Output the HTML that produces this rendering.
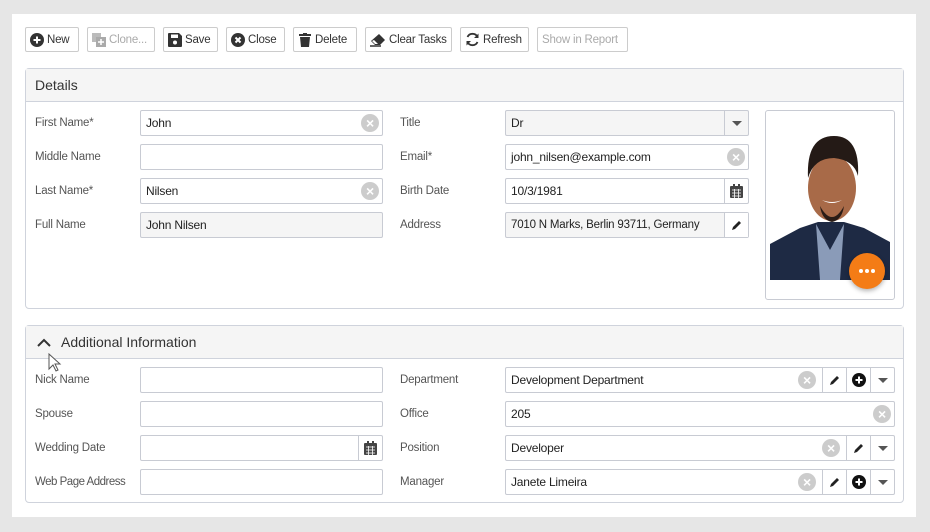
<!DOCTYPE html>
<html><head><meta charset="utf-8"><style>
*{box-sizing:border-box;margin:0;padding:0}
body{width:930px;height:532px;background:#e6e6e6;font-family:"Liberation Sans",sans-serif;font-size:12px;color:#333;position:relative;overflow:hidden}
.panel{position:absolute;left:12px;top:14px;width:904px;height:503px;background:#fff}
.a{position:absolute}
.btn{position:absolute;top:27px;height:25px;border:1px solid #ccc;border-radius:2px;background:#fff;display:flex;align-items:center;padding:0 4px;gap:3px;font-size:11.5px;color:#333;white-space:nowrap;letter-spacing:-0.2px;overflow:hidden}
.btn.dis{color:#aaa}
.grp{position:absolute;left:25px;width:879px;border:1px solid #cfd3dc;border-radius:4px;background:#fff}
.gh{height:33px;background:#f5f5f5;border-bottom:1px solid #cfd3dc;font-size:14px;color:#333;display:flex;align-items:center;padding-left:9px}
.lbl{position:absolute;font-size:11.5px;color:#555;white-space:nowrap;letter-spacing:-0.2px}
.inp{position:absolute;height:26px;border:1px solid #c8cbd3;border-radius:2px;background:#fff;font-size:12px;color:#222;display:flex;align-items:center;padding-left:5px;white-space:nowrap;letter-spacing:-0.2px}
.inp.g{background:#f5f5f5}
.ib{position:absolute;top:0;height:24px;width:24px;display:flex;align-items:center;justify-content:center;border-left:1px solid #c8cbd3}
.clr{position:absolute;top:3px;width:18px;height:18px;border-radius:50%;background:#ccc;color:#fff;font-size:14px;font-weight:bold;display:flex;align-items:center;justify-content:center;line-height:1}
.tri{width:0;height:0;border-left:5px solid transparent;border-right:5px solid transparent;border-top:5px solid #555}
</style></head><body>
<div class="panel"></div>

<div class="btn" style="left:25px;width:54px"><svg width="14" height="14" viewBox="0 0 14 14"><circle cx="7" cy="7" r="7" fill="#333"/><path d="M7 3.5v7M3.5 7h7" stroke="#fff" stroke-width="2"/></svg>New</div>
<div class="btn dis" style="left:87px;width:68px"><svg width="14" height="14" viewBox="0 0 14 14"><rect x="0" y="0" width="9" height="9" fill="#bbb"/><rect x="4" y="4" width="10" height="10" fill="#aaa"/><path d="M9 6v6M6 9h6" stroke="#fff" stroke-width="1.5"/></svg>Clone...</div>
<div class="btn" style="left:163px;width:55px"><svg width="14" height="14" viewBox="0 0 14 14"><path d="M0 1q0-1 1-1h10l3 3v10q0 1-1 1H1q-1 0-1-1z" fill="#333"/><rect x="3" y="1.5" width="7" height="3.5" fill="#fff"/><circle cx="7" cy="9.5" r="2" fill="#fff"/></svg>Save</div>
<div class="btn" style="left:226px;width:59px"><svg width="14" height="14" viewBox="0 0 14 14"><circle cx="7" cy="7" r="7" fill="#333"/><path d="M4.5 4.5l5 5M9.5 4.5l-5 5" stroke="#fff" stroke-width="2"/></svg>Close</div>
<div class="btn" style="left:293px;width:64px"><svg width="14" height="14" viewBox="0 0 14 14"><rect x="1" y="1" width="12" height="2" fill="#333"/><rect x="5" y="0" width="4" height="2" fill="#333"/><path d="M2 4h10l-1 10H3z" fill="#333"/></svg>Delete</div>
<div class="btn" style="left:365px;width:87px"><svg width="16" height="14" viewBox="0 0 16 14"><path d="M9 1l6 6-5 5H5L1 8z" fill="#333"/><path d="M4 7l4 4H5L2 8z" fill="#fff"/><path d="M0 13h11" stroke="#333" stroke-width="1.4"/></svg>Clear Tasks</div>
<div class="btn" style="left:460px;width:69px"><svg width="15" height="15" viewBox="0 0 15 15"><path d="M12.5 5A5.5 5.5 0 0 0 2.5 5M2.5 10a5.5 5.5 0 0 0 10 0" fill="none" stroke="#333" stroke-width="1.8"/><path d="M13.5 1.5v4.5h-4.5z M1.5 13.5V9h4.5z" fill="#333"/></svg>Refresh</div>
<div class="btn dis" style="left:537px;width:91px">Show in Report</div>

<div class="grp" style="top:68px;height:241px">
<div class="gh">Details</div>
</div>
<div class="lbl" style="left:35px;top:117px">First Name*</div>
<div class="lbl" style="left:35px;top:151px">Middle Name</div>
<div class="lbl" style="left:35px;top:185px">Last Name*</div>
<div class="lbl" style="left:35px;top:219px">Full Name</div>
<div class="inp" style="left:140px;top:110px;width:243px">John<div class="clr" style="right:3px">×</div></div>
<div class="inp" style="left:140px;top:144px;width:243px"></div>
<div class="inp" style="left:140px;top:178px;width:243px">Nilsen<div class="clr" style="right:3px">×</div></div>
<div class="inp g" style="left:140px;top:212px;width:243px">John Nilsen</div>
<div class="lbl" style="left:400px;top:117px">Title</div>
<div class="lbl" style="left:400px;top:151px">Email*</div>
<div class="lbl" style="left:400px;top:185px">Birth Date</div>
<div class="lbl" style="left:400px;top:219px">Address</div>
<div class="inp g" style="left:505px;top:110px;width:244px">Dr<div class="ib" style="right:0"><div class="tri"></div></div></div>
<div class="inp" style="left:505px;top:144px;width:244px">john_nilsen@example.com<div class="clr" style="right:3px">×</div></div>
<div class="inp" style="left:505px;top:178px;width:244px">10/3/1981<div class="ib" style="right:0"><svg width="13" height="14" viewBox="0 0 13 14"><rect x="0" y="2" width="13" height="12" rx="1" fill="#444"/><rect x="3" y="0" width="2" height="3" fill="#444"/><rect x="8" y="0" width="2" height="3" fill="#444"/><path d="M2 6h9M2 9h9M2 12h9M4.5 5v9M8.5 5v9" stroke="#fff" stroke-width="0.8"/></svg></div></div>
<div class="inp g" style="left:505px;top:212px;width:244px;font-size:11.5px">7010 N Marks, Berlin 93711, Germany<div class="ib" style="right:0;background:#fff"><svg width="12" height="12" viewBox="0 0 12 12"><path d="M1 11l1-3 6-6 2 2-6 6z" fill="#222"/></svg></div></div>

<div class="a" style="left:765px;top:110px;width:130px;height:190px;border:1px solid #c8cbd3;border-radius:3px;background:#fff"></div>
<svg class="a" style="left:770px;top:132px" width="120" height="148" viewBox="0 0 120 148">
<path d="M0 112l30-16 18-6 26 0 20 6 26 14v38H0z" fill="#1e2a44"/>
<path d="M46 92l14 26 14-26 -4 56H50z" fill="#8a9bb8"/>
<ellipse cx="62" cy="56" rx="24" ry="33" fill="#a86a48"/>
<path d="M38 46q-2-42 26-42 26 0 24 40-4-16-24-18-20 0-26 20z" fill="#241a16"/>
<path d="M50 74q12 22 24 0-2 14-12 16-10-2-12-16z" fill="#2a1c16"/>
<path d="M52 68q10 6 20 0-10 4-20 0z" fill="#fff"/>
</svg>
<div class="a" style="left:849px;top:253px;width:36px;height:36px;border-radius:50%;background:#f47c16;box-shadow:0 2px 5px rgba(0,0,0,.3);display:flex;align-items:center;justify-content:center;gap:2px"><i style="width:4px;height:4px;border-radius:50%;background:#fff"></i><i style="width:4px;height:4px;border-radius:50%;background:#fff"></i><i style="width:4px;height:4px;border-radius:50%;background:#fff"></i></div>

<div class="grp" style="top:325px;height:178px">
<div class="gh" style="font-size:14px;padding-left:11px"><svg width="14" height="9" viewBox="0 0 14 9" style="margin-right:10px"><path d="M1 8l6-6 6 6" fill="none" stroke="#333" stroke-width="2"/></svg>Additional Information</div>
</div>
<svg class="a" style="left:48px;top:353px" width="14" height="20" viewBox="0 0 14 20"><path d="M1 1v15l4-4 3 6 2-1-3-6h5z" fill="#fff" stroke="#555" stroke-width="1"/></svg>

<div class="lbl" style="left:35px;top:374px">Nick Name</div>
<div class="lbl" style="left:35px;top:408px">Spouse</div>
<div class="lbl" style="left:35px;top:442px">Wedding Date</div>
<div class="lbl" style="left:35px;top:476px;letter-spacing:-0.5px">Web Page Address</div>
<div class="inp" style="left:140px;top:367px;width:243px"></div>
<div class="inp" style="left:140px;top:401px;width:243px"></div>
<div class="inp" style="left:140px;top:435px;width:243px"><div class="ib" style="right:0"><svg width="13" height="14" viewBox="0 0 13 14"><rect x="0" y="2" width="13" height="12" rx="1" fill="#444"/><rect x="3" y="0" width="2" height="3" fill="#444"/><rect x="8" y="0" width="2" height="3" fill="#444"/><path d="M2 6h9M2 9h9M2 12h9M4.5 5v9M8.5 5v9" stroke="#fff" stroke-width="0.8"/></svg></div></div>
<div class="inp" style="left:140px;top:469px;width:243px"></div>
<div class="lbl" style="left:400px;top:374px">Department</div>
<div class="lbl" style="left:400px;top:408px">Office</div>
<div class="lbl" style="left:400px;top:442px">Position</div>
<div class="lbl" style="left:400px;top:476px">Manager</div>

<div class="inp" style="left:505px;top:367px;width:390px">Development Department<div class="clr" style="right:78px">×</div><div class="ib" style="right:48px"><svg width="12" height="12" viewBox="0 0 12 12"><path d="M1 11l1-3 6-6 2 2-6 6z" fill="#222"/></svg></div><div class="ib" style="right:24px"><svg width="14" height="14" viewBox="0 0 14 14"><circle cx="7" cy="7" r="7" fill="#111"/><path d="M7 3.5v7M3.5 7h7" stroke="#fff" stroke-width="2"/></svg></div><div class="ib" style="right:0"><div class="tri"></div></div></div>
<div class="inp" style="left:505px;top:401px;width:390px">205<div class="clr" style="right:3px">×</div></div>
<div class="inp" style="left:505px;top:435px;width:390px">Developer<div class="clr" style="right:54px">×</div><div class="ib" style="right:24px"><svg width="12" height="12" viewBox="0 0 12 12"><path d="M1 11l1-3 6-6 2 2-6 6z" fill="#222"/></svg></div><div class="ib" style="right:0"><div class="tri"></div></div></div>
<div class="inp" style="left:505px;top:469px;width:390px">Janete Limeira<div class="clr" style="right:78px">×</div><div class="ib" style="right:48px"><svg width="12" height="12" viewBox="0 0 12 12"><path d="M1 11l1-3 6-6 2 2-6 6z" fill="#222"/></svg></div><div class="ib" style="right:24px"><svg width="14" height="14" viewBox="0 0 14 14"><circle cx="7" cy="7" r="7" fill="#111"/><path d="M7 3.5v7M3.5 7h7" stroke="#fff" stroke-width="2"/></svg></div><div class="ib" style="right:0"><div class="tri"></div></div></div>
</body></html>
